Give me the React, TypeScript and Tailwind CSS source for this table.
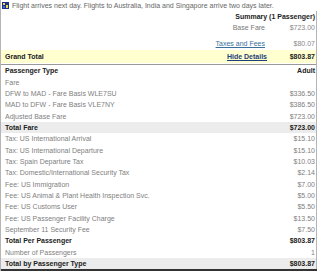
import React from "react";

const rows: { label: string; value: string; kind?: "bold" | "band" | "plain" }[] = [
  { label: "Fare", value: "" },
  { label: "DFW to MAD - Fare Basis WLE7SU", value: "$336.50" },
  { label: "MAD to DFW - Fare Basis VLE7NY", value: "$386.50" },
  { label: "Adjusted Base Fare", value: "$723.00" },
  { label: "Total Fare", value: "$723.00", kind: "band" },
  { label: "Tax: US International Arrival", value: "$15.10" },
  { label: "Tax: US International Departure", value: "$15.10" },
  { label: "Tax: Spain Departure Tax", value: "$10.03" },
  { label: "Tax: Domestic/International Security Tax", value: "$2.14" },
  { label: "Fee: US Immigration", value: "$7.00" },
  { label: "Fee: US Animal & Plant Health Inspection Svc.", value: "$5.00" },
  { label: "Fee: US Customs User", value: "$5.50" },
  { label: "Fee: US Passenger Facility Charge", value: "$13.50" },
  { label: "September 11 Security Fee", value: "$7.50" },
  { label: "Total Per Passenger", value: "$803.87", kind: "bold" },
  { label: "Number of Passengers", value: "1" },
  { label: "Total by Passenger Type", value: "$803.87", kind: "band" },
];

function Flag() {
  return (
    <svg width="7" height="7" viewBox="0 0 7 7" className="shrink-0">
      <rect x="0" y="0" width="7" height="7" fill="#1d2f8a" />
      <rect x="1" y="1" width="2" height="2" fill="#e8d84a" />
      <rect x="4" y="3" width="2" height="3" fill="#e8d84a" />
      <rect x="1" y="4" width="2" height="2" fill="#3c6fd0" />
    </svg>
  );
}

export default function App() {
  return (
    <div className="w-[320px] h-[272px] overflow-hidden bg-white font-['Liberation_Sans',Arial,sans-serif] text-[7px] leading-none">
      <div className="w-[317px] border-l border-[#b5b5b5]">
        <div className="h-[11px] flex items-center gap-[3px] pl-[1px] text-[#666] whitespace-nowrap">
          <Flag />
          <span>Flight arrives next day. Flights to Australia, India and Singapore arrive two days later.</span>
        </div>
        <div className="border-r border-[#b5b5b5]">
          <div className="h-[11px] flex items-center justify-end pr-[1px] font-bold text-[#222]">
            Summary (1 Passenger)
          </div>
          <div className="h-[11px] flex items-center">
            <div className="flex-1 text-right text-[#777]">Base Fare</div>
            <div className="w-[51px] text-right pr-[1px] text-[#888]">$723.00</div>
          </div>
          <div className="h-[11px] mt-[5px] flex items-center">
            <div className="flex-1 text-right">
              <span className="text-[#3a6f9a] underline">Taxes and Fees</span>
            </div>
            <div className="w-[51px] text-right pr-[1px] text-[#888]">$80.07</div>
          </div>
          <div className="h-[13px] mt-[1px] bg-[#ffffd0] flex items-center font-bold whitespace-nowrap">
            <div className="pl-[4px] text-[#222]">Grand Total</div>
            <div className="flex-1 text-right pr-[-2px]">
              <span className="text-[#1f3f7a] underline">Hide Details</span>
            </div>
            <div className="w-[49px] text-right pr-[1px] text-[#222]">$803.87</div>
          </div>
          <div className="h-[1px] mt-[1px] bg-[#999]" />
          <div className="h-[11.35px] flex items-center justify-between pl-[4px] pr-[1px] font-bold text-[#222]">
            <span>Passenger Type</span>
            <span>Adult</span>
          </div>
          {rows.map((r) => (
            <div
              key={r.label}
              className={
                "h-[11.35px] flex items-center justify-between pl-[4px] pr-[1px] whitespace-nowrap " +
                (r.kind === "band"
                  ? "bg-[#ececec] font-bold text-[#222]"
                  : r.kind === "bold"
                  ? "font-bold text-[#222]"
                  : "text-[#808080]")
              }
            >
              <span>{r.label}</span>
              <span>{r.value}</span>
            </div>
          ))}
        </div>
        <div className="h-[2px] bg-[#333]" />
      </div>
    </div>
  );
}
